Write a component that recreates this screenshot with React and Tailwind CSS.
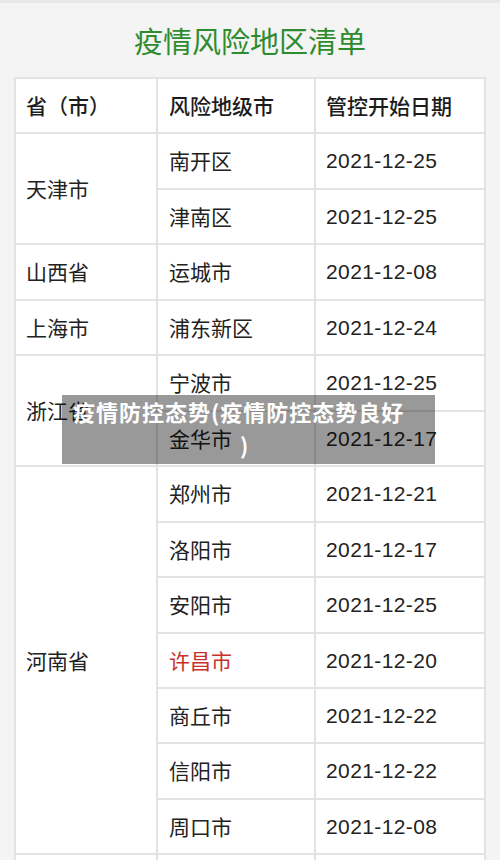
import React from "react";

const groups = [
  { p: "天津市", items: [["南开区", "2021-12-25"], ["津南区", "2021-12-25"]] },
  { p: "山西省", items: [["运城市", "2021-12-08"]] },
  { p: "上海市", items: [["浦东新区", "2021-12-24"]] },
  { p: "浙江省", items: [["宁波市", "2021-12-25"], ["金华市", "2021-12-17"]] },
  {
    p: "河南省",
    items: [
      ["郑州市", "2021-12-21"],
      ["洛阳市", "2021-12-17"],
      ["安阳市", "2021-12-25"],
      ["许昌市", "2021-12-20", true],
      ["商丘市", "2021-12-22"],
      ["信阳市", "2021-12-22"],
      ["周口市", "2021-12-08"],
    ],
  },
];

const spanClass = {
  1: "row-span-1",
  2: "row-span-2",
  7: "row-span-7",
};

const cjk = "font-['Noto_Sans_CJK_SC',sans-serif]";
const latin = "font-['Liberation_Sans',Arial,sans-serif]";

export default function App() {
  return (
    <div className="relative w-[500px] h-[860px] overflow-hidden bg-[#f4f4f4]">
      <div className="h-[3px] bg-[#e8e8e8]" />
      <div
        className={`h-[74px] flex items-center justify-center text-[29px] leading-none text-[#2e8c2e] ${cjk}`}
      >
        疫情风险地区清单
      </div>
      <div className="ml-[14px] w-[472px] grid grid-cols-[140px_156px_168px] auto-rows-[53.46px] gap-[2px] p-[2px] bg-[#e3e3e3]">
        <div className={`col-start-1 bg-white flex items-center pl-[10px] text-[21px] font-medium text-[#1c1c1c] ${cjk}`}>
          省（市）
        </div>
        <div className={`col-start-2 bg-white flex items-center pl-[11px] text-[21px] font-medium text-[#1c1c1c] ${cjk}`}>
          风险地级市
        </div>
        <div className={`col-start-3 bg-white flex items-center pl-[10px] text-[21px] font-medium text-[#1c1c1c] ${cjk}`}>
          管控开始日期
        </div>
        {groups.map((g) => (
          <React.Fragment key={g.p}>
            <div
              className={`col-start-1 ${spanClass[g.items.length]} bg-white flex items-center pl-[10px] text-[21px] text-[#222] ${cjk}`}
            >
              {g.p}
            </div>
            {g.items.map(([city, date, red]) => (
              <React.Fragment key={city}>
                <div
                  className={`col-start-2 bg-white flex items-center pl-[11px] text-[21px] ${
                    red ? "text-[#c8312d]" : "text-[#222]"
                  } ${cjk}`}
                >
                  {city}
                </div>
                <div
                  className={`col-start-3 bg-white flex items-center pl-[10px] text-[21px] tracking-[0.4px] text-[#222] ${latin}`}
                >
                  {date}
                </div>
              </React.Fragment>
            ))}
          </React.Fragment>
        ))}
        <div className="col-start-1 bg-white" />
        <div className="col-start-2 bg-white" />
        <div className="col-start-3 bg-white" />
      </div>
      <div
        className={`absolute left-[62px] top-[395px] w-[373px] h-[69px] bg-[rgba(0,0,0,0.4)] pl-[11px] text-[22px] leading-[33px] font-bold tracking-[1px] text-white ${cjk}`}
      >
        <span className="block whitespace-nowrap">疫情防控态势(疫情防控态势良好</span>
        <span className="block pl-[167px]">)</span>
      </div>
    </div>
  );
}
